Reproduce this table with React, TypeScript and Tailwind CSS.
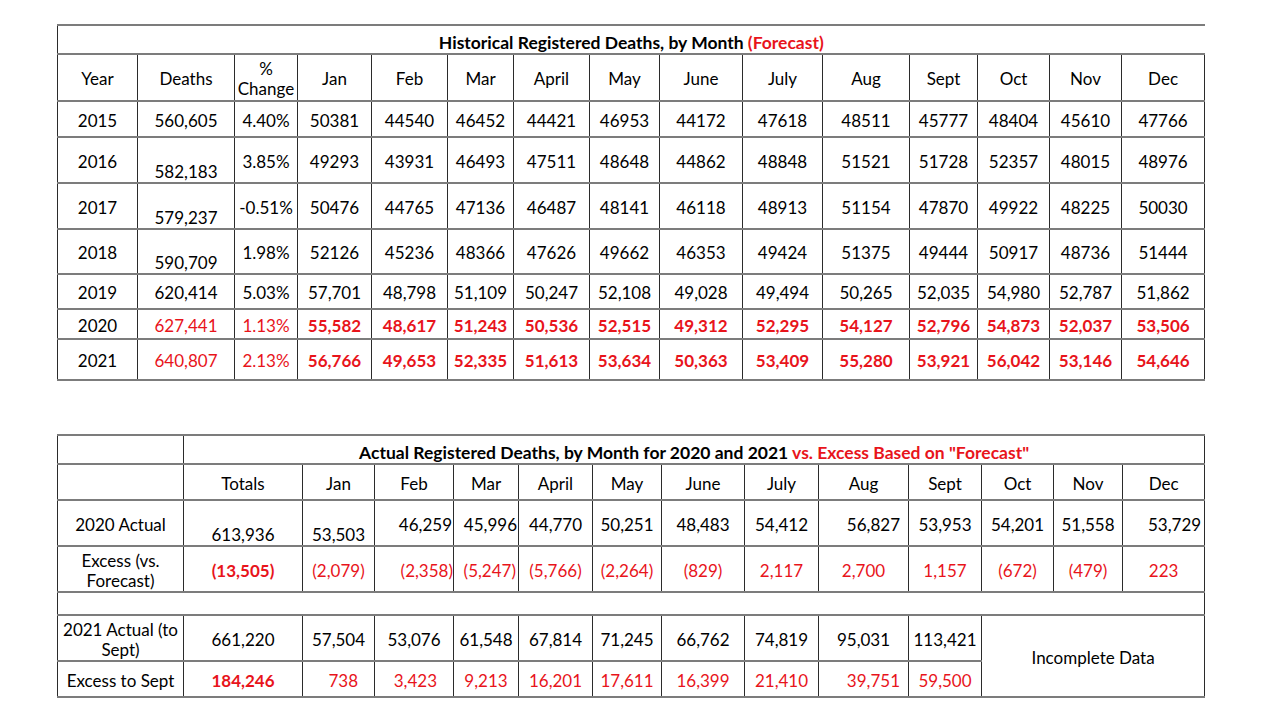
import React from 'react';

const RED = 'text-[#e8141b]';
const CELL = 'border-x border-x-[#2b2b2b] border-y-2 border-y-[#7c7c7c] px-0 pt-[3px] pb-0 leading-[20px]';

const MONTHS = ['Jan', 'Feb', 'Mar', 'April', 'May', 'June', 'July', 'Aug', 'Sept', 'Oct', 'Nov', 'Dec'];

type HistRow = {
  year: string;
  deaths: string;
  pct: string;
  months: string[];
  h: string;
  low?: boolean;
  forecast?: boolean;
};

const HIST: HistRow[] = [
  { year: '2015', deaths: '560,605', pct: '4.40%', h: 'h-[36px]', months: ['50381', '44540', '46452', '44421', '46953', '44172', '47618', '48511', '45777', '48404', '45610', '47766'] },
  { year: '2016', deaths: '582,183', pct: '3.85%', h: 'h-[46px]', low: true, months: ['49293', '43931', '46493', '47511', '48648', '44862', '48848', '51521', '51728', '52357', '48015', '48976'] },
  { year: '2017', deaths: '579,237', pct: '-0.51%', h: 'h-[46px]', low: true, months: ['50476', '44765', '47136', '46487', '48141', '46118', '48913', '51154', '47870', '49922', '48225', '50030'] },
  { year: '2018', deaths: '590,709', pct: '1.98%', h: 'h-[45px]', low: true, months: ['52126', '45236', '48366', '47626', '49662', '46353', '49424', '51375', '49444', '50917', '48736', '51444'] },
  { year: '2019', deaths: '620,414', pct: '5.03%', h: 'h-[35px]', months: ['57,701', '48,798', '51,109', '50,247', '52,108', '49,028', '49,494', '50,265', '52,035', '54,980', '52,787', '51,862'] },
  { year: '2020', deaths: '627,441', pct: '1.13%', h: 'h-[30px]', forecast: true, months: ['55,582', '48,617', '51,243', '50,536', '52,515', '49,312', '52,295', '54,127', '52,796', '54,873', '52,037', '53,506'] },
  { year: '2021', deaths: '640,807', pct: '2.13%', h: 'h-[41px]', forecast: true, months: ['56,766', '49,653', '52,335', '51,613', '53,634', '50,363', '53,409', '55,280', '53,921', '56,042', '53,146', '54,646'] },
];

const TOP_COLS = [80, 97, 63, 74, 76, 66, 76, 70, 83, 80, 87, 68, 72, 72, 83];
const BOT_COLS = [126, 119, 72, 79, 65, 74, 69, 83, 74, 90, 73, 72, 69, 82];

// [text, extra classes]
type C = [string, string?];

const ACTUAL_2020: C[] = [
  ['613,936', 'align-bottom'],
  ['53,503', 'align-bottom'],
  ['46,259', 'text-right pr-[1px]'],
  ['45,996', 'text-right pr-[1px]'],
  ['44,770'],
  ['50,251'],
  ['48,483'],
  ['54,412'],
  ['56,827', 'text-right pr-2'],
  ['53,953'],
  ['54,201'],
  ['51,558'],
  ['53,729', 'text-right pr-[3px]'],
];

const EXCESS_2020: C[] = [
  ['(13,505)', 'font-bold'],
  ['(2,079)'],
  ['(2,358)', 'text-right pr-0'],
  ['(5,247)', 'text-right pr-[2px]'],
  ['(5,766)'],
  ['(2,264)'],
  ['(829)'],
  ['2,117'],
  ['2,700'],
  ['1,157'],
  ['(672)'],
  ['(479)'],
  ['223'],
];

const ACTUAL_2021: C[] = [
  ['661,220'],
  ['57,504'],
  ['53,076'],
  ['61,548'],
  ['67,814'],
  ['71,245'],
  ['66,762'],
  ['74,819'],
  ['95,031'],
  ['113,421'],
];

const EXCESS_2021: C[] = [
  ['184,246', 'font-bold'],
  ['738', 'text-right pr-4'],
  ['3,423', 'text-right pr-4'],
  ['9,213'],
  ['16,201'],
  ['17,611'],
  ['16,399'],
  ['21,410'],
  ['39,751', 'text-right pr-2'],
  ['59,500'],
];

function HistoricalTable() {
  return (
    <table className="w-[1147px] table-fixed border-collapse text-center text-[17px] text-black">
      <colgroup>
        {TOP_COLS.map((w, i) => (
          <col key={i} style={{ width: w }} />
        ))}
      </colgroup>
      <tbody>
        <tr className="h-[29px]">
          <td colSpan={15} className={`${CELL} border-r-0 align-bottom text-[17.5px] font-bold`}>
            Historical Registered Deaths, by Month <span className={RED}>(Forecast)</span>
          </td>
        </tr>
        <tr className="h-[47px]">
          <td className={CELL}>Year</td>
          <td className={CELL}>Deaths</td>
          <td className={CELL}>
            %<br />
            Change
          </td>
          {MONTHS.map((m) => (
            <td key={m} className={CELL}>
              {m}
            </td>
          ))}
        </tr>
        {HIST.map((r) => (
          <tr key={r.year} className={r.h}>
            <td className={CELL}>{r.year}</td>
            <td className={`${CELL} ${r.low ? 'align-bottom' : ''} ${r.forecast ? RED : ''}`}>{r.deaths}</td>
            <td className={`${CELL} ${r.forecast ? RED : ''}`}>{r.pct}</td>
            {r.months.map((v, i) => (
              <td key={i} className={`${CELL} ${r.forecast ? `${RED} font-bold` : ''}`}>
                {v}
              </td>
            ))}
          </tr>
        ))}
      </tbody>
    </table>
  );
}

function Row({ cells, red }: { cells: C[]; red?: boolean }) {
  return (
    <>
      {cells.map(([v, cls], i) => (
        <td key={i} className={`${CELL} ${red ? RED : ''} ${cls ?? ''}`}>
          {v}
        </td>
      ))}
    </>
  );
}

function ActualTable() {
  return (
    <table className="w-[1147px] table-fixed border-collapse text-center text-[17px] text-black">
      <colgroup>
        {BOT_COLS.map((w, i) => (
          <col key={i} style={{ width: w }} />
        ))}
      </colgroup>
      <tbody>
        <tr className="h-[29px]">
          <td className={CELL} />
          <td colSpan={13} className={`${CELL} align-bottom text-[17.5px] font-bold`}>
            Actual Registered Deaths, by Month for 2020 and 2021{' '}
            <span className={RED}>vs. Excess Based on "Forecast"</span>
          </td>
        </tr>
        <tr className="h-[36px]">
          <td className={CELL} />
          <td className={CELL}>Totals</td>
          {MONTHS.map((m) => (
            <td key={m} className={CELL}>
              {m}
            </td>
          ))}
        </tr>
        <tr className="h-[46px]">
          <td className={CELL}>2020 Actual</td>
          <Row cells={ACTUAL_2020} />
        </tr>
        <tr className="h-[46px]">
          <td className={CELL}>
            Excess (vs.
            <br />
            Forecast)
          </td>
          <Row cells={EXCESS_2020} red />
        </tr>
        <tr className="h-[23px]">
          <td colSpan={14} className={CELL} />
        </tr>
        <tr className="h-[46px]">
          <td className={CELL}>
            2021 Actual (to
            <br />
            Sept)
          </td>
          <Row cells={ACTUAL_2021} />
          <td colSpan={3} rowSpan={2} className={CELL}>
            Incomplete Data
          </td>
        </tr>
        <tr className="h-[36px]">
          <td className={CELL}>Excess to Sept</td>
          <Row cells={EXCESS_2021} red />
        </tr>
      </tbody>
    </table>
  );
}

export default function App() {
  return (
    <div className="h-[720px] w-[1280px] bg-white pl-[57px] pt-[24px]" style={{ fontFamily: 'Lato, "Open Sans", sans-serif' }}>
      <HistoricalTable />
      <div className="h-[53px]" />
      <ActualTable />
    </div>
  );
}
